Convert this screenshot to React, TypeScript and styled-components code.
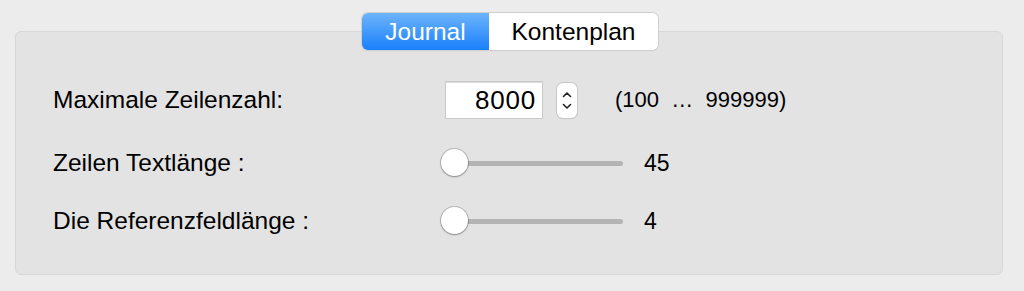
import React from "react";
import styled, { createGlobalStyle } from "styled-components";

const Global = createGlobalStyle`
  html, body { margin: 0; padding: 0; background: #ececec; }
  body { font-family: "Liberation Sans", Arial, sans-serif; color: #000; }
`;

const Page = styled.div`
  width: 1024px;
  height: 291px;
  box-sizing: border-box;
  padding: 13px 21px 0 15px;
  background: #ececec;
`;

const TabBar = styled.div`
  position: relative;
  z-index: 1;
  display: flex;
  justify-content: center;
  margin-bottom: -19px;
  padding-left: 2px;
`;

const Segmented = styled.div`
  display: flex;
  height: 37px;
  border-radius: 6px;
  background: #fff;
  box-shadow: 0 0 0 1px #cfcfcf, 0 1px 1px rgba(0, 0, 0, 0.12);
  overflow: hidden;
`;

const Segment = styled.div<{ $active?: boolean; $w: number }>`
  width: ${(p) => p.$w}px;
  display: flex;
  align-items: center;
  justify-content: center;
  font-size: 24.5px;
  color: ${(p) => (p.$active ? "#fff" : "#000")};
  background: ${(p) =>
    p.$active ? "linear-gradient(#6db4fb, #1a80fb)" : "#fff"};
`;

const GroupBox = styled.div`
  height: 244px;
  box-sizing: border-box;
  background: #e3e3e3;
  border: 1px solid #d8d8d8;
  border-radius: 6px;
  padding: 49px 0 0 37px;
  display: flex;
  flex-direction: column;
  gap: 30px;
`;

const Row = styled.div<{ $h: number }>`
  display: grid;
  grid-template-columns: 388px auto;
  align-items: center;
  height: ${(p) => p.$h}px;
`;

const Label = styled.div`
  font-size: 24.5px;
  color: #000;
`;

const Controls = styled.div`
  display: flex;
  align-items: center;
`;

const NumberField = styled.div`
  margin-left: 4px;
  width: 98px;
  height: 38px;
  box-sizing: border-box;
  background: #fff;
  border: 1px solid #c9c9c9;
  box-shadow: inset 0 1px 0 #dcdcdc;
  display: flex;
  align-items: center;
  justify-content: flex-end;
  padding-right: 6px;
  font-size: 26px;
  letter-spacing: 0.8px;
  color: #000;
`;

const Stepper = styled.div`
  margin-left: 14px;
  width: 20px;
  height: 35px;
  box-sizing: border-box;
  background: #fff;
  border-radius: 6px;
  box-shadow: 0 0 0 1px #c8c8c8, 0 1px 1px rgba(0, 0, 0, 0.12);
  display: flex;
  flex-direction: column;
  align-items: center;
  justify-content: center;
  gap: 5px;
`;

const Range = styled.div`
  margin-left: 38px;
  font-size: 22px;
  color: #000;
  white-space: pre;
`;

const Slider = styled.div`
  position: relative;
  width: 182px;
  height: 28px;
  display: flex;
  align-items: center;
`;

const Track = styled.div`
  margin-left: 13px;
  flex: 1;
  height: 5px;
  border-radius: 3px;
  background: #b4b4b4;
`;

const Knob = styled.div`
  position: absolute;
  left: 0;
  top: 0;
  width: 27px;
  height: 27px;
  border-radius: 50%;
  background: #fff;
  box-shadow: 0 0 0 1px rgba(0, 0, 0, 0.18), 0 1px 2px rgba(0, 0, 0, 0.25);
`;

const Value = styled.div`
  margin-left: 21px;
  font-size: 23px;
  color: #000;
`;

const Chevron = ({ up }: { up?: boolean }) => (
  <svg width="10" height="7" viewBox="0 0 10 7">
    <path
      d={up ? "M1.5 5.5 L5 2 L8.5 5.5" : "M1.5 1.5 L5 5 L8.5 1.5"}
      fill="none"
      stroke="#222"
      strokeWidth="1.6"
      strokeLinecap="round"
      strokeLinejoin="round"
    />
  </svg>
);

const SliderRow = ({ label, value }: { label: string; value: string }) => (
  <Row $h={28}>
    <Label>{label}</Label>
    <Controls>
      <Slider>
        <Track />
        <Knob />
      </Slider>
      <Value>{value}</Value>
    </Controls>
  </Row>
);

export default function App() {
  return (
    <Page>
      <Global />
      <TabBar>
        <Segmented>
          <Segment $active $w={127}>Journal</Segment>
          <Segment $w={169}>Kontenplan</Segment>
        </Segmented>
      </TabBar>
      <GroupBox>
        <Row $h={38}>
          <Label>Maximale Zeilenzahl:</Label>
          <Controls>
            <NumberField>8000</NumberField>
            <Stepper>
              <Chevron up />
              <Chevron />
            </Stepper>
            <Range>{"(100  …  999999)"}</Range>
          </Controls>
        </Row>
        <SliderRow label="Zeilen Textlänge :" value="45" />
        <SliderRow label="Die Referenzfeldlänge :" value="4" />
      </GroupBox>
    </Page>
  );
}
